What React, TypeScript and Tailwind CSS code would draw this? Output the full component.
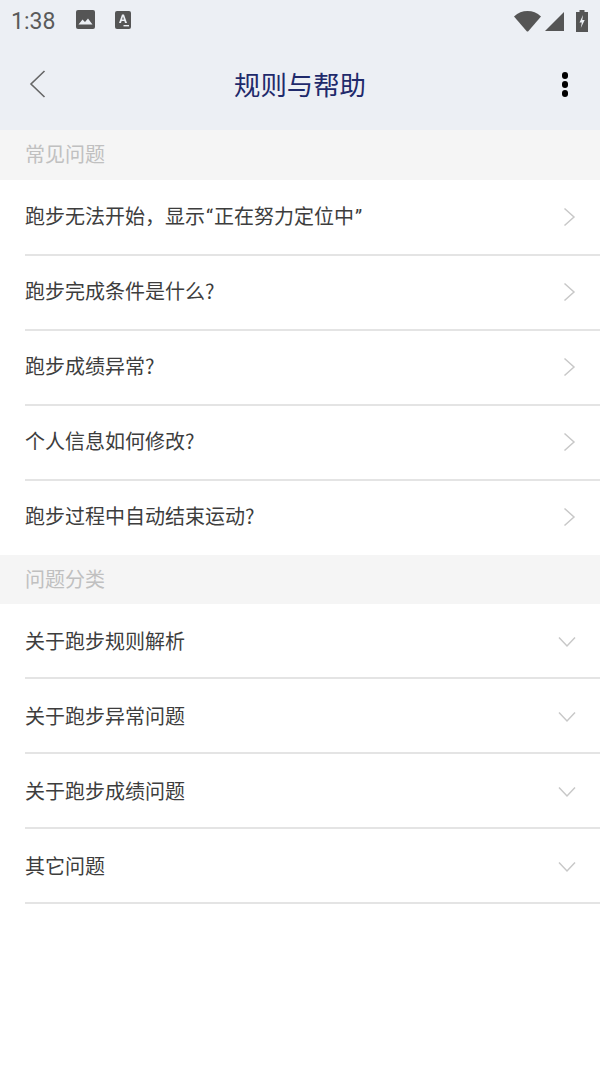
import React from 'react';

const font = { fontFamily: '"Noto Sans CJK SC", sans-serif' };

const common = [
  '跑步完成条件是什么?',
  '跑步成绩异常?',
  '个人信息如何修改?',
  '跑步过程中自动结束运动?',
];
const categories = ['关于跑步规则解析', '关于跑步异常问题', '关于跑步成绩问题', '其它问题'];

const StatusBar = () => (
  <div className="h-[42px] flex items-center pl-[11px] pr-[12px] text-[#5a5a5a]">
    <span className="text-[23px] leading-none font-['Roboto',sans-serif] w-[65px]">1:38</span>
    {/* picture notification */}
    <svg width="19" height="19" viewBox="0 0 19 19" className="mb-[3px]">
      <rect width="19" height="19" rx="2" fill="#555" />
      <path d="M2.5 14.5 L6.5 9.5 L9 12 L12 8.5 L16.5 14.5 Z" fill="#eceff4" />
    </svg>
    {/* A notification */}
    <svg width="16" height="18" viewBox="0 0 16 18" className="ml-[20px] mb-[3px]">
      <rect width="16" height="18" rx="2" fill="#555" />
      <path d="M4 12 L7 3.5 H9 L12 12 H10 L9.4 10 H6.6 L6 12 Z M7.1 8.4 H8.9 L8 5.6 Z" fill="#eceff4" fillRule="evenodd" />
      <rect x="8.5" y="14" width="5.5" height="1.4" fill="#eceff4" />
    </svg>
    <div className="ml-auto flex items-center">
      <svg width="27" height="21" viewBox="0 0 27 21">
        <path d="M0 5.5 C4 1.5 8.5 0 13.5 0 C18.5 0 23 1.5 27 5.5 L14.5 20 Q13.5 21 12.5 20 Z" fill="#555" />
      </svg>
      <svg width="19" height="19" viewBox="0 0 19 19" className="ml-[4px]">
        <path d="M0 19 L19 0 V19 Z" fill="#555" />
      </svg>
      <svg width="12" height="22" viewBox="0 0 12 22" className="ml-[12px]">
        <path d="M3.5 0 H8.5 V2 H12 V22 H0 V2 H3.5 Z" fill="#555" />
        <path d="M7 5 L3.5 12.5 H5.8 L4.8 18 L8.7 10 H6.3 Z" fill="#eceff4" />
      </svg>
    </div>
  </div>
);

type RowProps = { children: React.ReactNode; down?: boolean; noLine?: boolean; nudge?: boolean };

const Row = ({ children, down, noLine, nudge }: RowProps) => (
  <div className="pl-[25px]">
    <div
      className={`h-[75px] flex items-center justify-between border-b-2 text-[20px] text-[#3d3d3d] ${
        noLine ? 'border-transparent' : 'border-[#e4e4e4]'
      } ${down ? '' : 'pb-[4px]'}`}
    >
      <span className={`leading-none whitespace-nowrap ${nudge ? 'mt-[2px]' : ''}`}>{children}</span>
      {down ? (
        <svg width="20" height="12" viewBox="0 0 20 12" fill="none" stroke="#c8c8c8" strokeWidth="1.5" className="mr-[23px] mt-[3px]">
          <path d="M2 1.5 L10 10 L18 1.5" />
        </svg>
      ) : (
        <svg width="13" height="20" viewBox="0 0 13 20" fill="none" stroke="#c8c8c8" strokeWidth="1.5" className="mr-[24px] mt-[3px]">
          <path d="M1.5 1.5 L11 10 L1.5 18.5" />
        </svg>
      )}
    </div>
  </div>
);

const Section = ({ title, h }: { title: string; h: string }) => (
  <div className={`${h} relative bg-[#f5f5f5] pl-[25px] pb-[2px] flex items-center text-[20px] text-[#c0c0c0]`}>
    <span className="leading-none">{title}</span>
  </div>
);

const Quote = ({ children }: { children: string }) => (
  <span className="font-['Roboto',sans-serif] px-[1px]">{children}</span>
);

export default function App() {
  return (
    <div className="w-[600px] h-[1066px] bg-white overflow-hidden" style={font}>
      <header className="h-[130px] bg-[#eceff4]">
        <StatusBar />
        <div className="h-[88px] grid grid-cols-[1fr_auto_1fr] items-center px-[29px] pb-[4px]">
          <svg width="17" height="28" viewBox="0 0 17 28" fill="none" stroke="#666" strokeWidth="1.6">
            <path d="M15.5 1 L2 14 L15.5 27" />
          </svg>
          <h1 className="text-[26.4px] leading-none font-normal text-[#1f2a6b]">规则与帮助</h1>
          <div className="flex flex-col gap-[2px] justify-self-end mr-[3px]">
            <span className="w-[6px] h-[7px] rounded-full bg-black" />
            <span className="w-[6px] h-[7px] rounded-full bg-black" />
            <span className="w-[6px] h-[7px] rounded-full bg-black" />
          </div>
        </div>
      </header>
      <Section title="常见问题" h="h-[50px]" />
      <div className="pt-[1px] -mb-[1px]">
        <Row nudge>
          跑步无法开始，显示<Quote>“</Quote>正在努力定位中<Quote>”</Quote>
        </Row>
        {common.map((q, i) => (
          <Row key={q} noLine={i === common.length - 1}>
            {q}
          </Row>
        ))}
      </div>
      <Section title="问题分类" h="h-[49px]" />
      {categories.map((q) => (
        <Row key={q} down>
          {q}
        </Row>
      ))}
    </div>
  );
}
